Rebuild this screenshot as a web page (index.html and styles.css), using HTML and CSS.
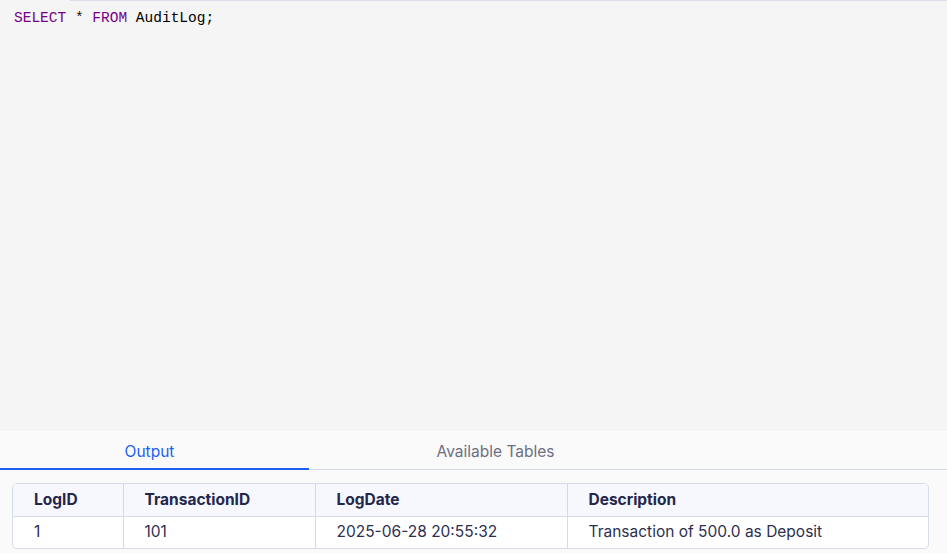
FILE: index.html
```html
<!DOCTYPE html>
<html>
<head>
<meta charset="utf-8">
<link rel="stylesheet" href="styles.css">
</head>
<body>
<div class="app">
  <div class="topline"><span class="topline-gap"></span><span class="topline-bar"></span></div>
  <div class="editor">
    <div class="code"><span class="kw">SELECT</span> <span class="op">*</span> <span class="kw">FROM</span> AuditLog;</div>
  </div>
  <div class="panel">
    <div class="tabs">
      <div class="tab tab-output active">Output</div>
      <div class="tab tab-tables">Available Tables</div>
    </div>
    <div class="result">
      <div class="card">
        <table class="grid">
          <thead>
            <tr>
              <th class="c1">LogID</th>
              <th class="c2">TransactionID</th>
              <th class="c3">LogDate</th>
              <th class="c4">Description</th>
            </tr>
          </thead>
          <tbody>
            <tr>
              <td>1</td>
              <td>101</td>
              <td>2025-06-28 20:55:32</td>
              <td>Transaction of 500.0 as Deposit</td>
            </tr>
          </tbody>
        </table>
      </div>
    </div>
  </div>
</div>
</body>
</html>
```
FILE: styles.css
```css
* { box-sizing: border-box; }
html, body { margin: 0; padding: 0; }
body { width: 947px; height: 553px; overflow: hidden; background: #fafafa; }
.app { display: flex; flex-direction: column; height: 553px; }
.topline { display: flex; height: 1px; background: #f5f5f5; }
.topline-gap { width: 70px; }
.topline-bar { flex: 1; background: #d9deea; }
.editor { height: 430px; background: #f5f5f5; padding: 8px 14px; }
.code { font-family: "Liberation Mono", "DejaVu Sans Mono", monospace; font-size: 14.5px; line-height: 18px; color: #000; }
.kw { color: #770088; }
.op { color: #221100; }
.panel { flex: 1; background: #fafafa; display: flex; flex-direction: column; }
.tabs { display: flex; height: 39px; border-bottom: 1px solid #d3dbe8; }
.tab { font-family: "Inter", "Open Sans", sans-serif; font-size: 15.5px; color: #6c6f82; display: flex; align-items: center; justify-content: center; padding-top: 3px; }
.tab-output { width: 309px; padding-right: 10px; }
.tab-tables { width: 373px; }
.tab.active { color: #1d5ef5; border-bottom: 2px solid #1d5ef5; margin-bottom: -1px; }
.result { padding: 13px 18px 0 12px; }
.card { border: 1px solid #d5dce8; border-radius: 5px; overflow: hidden; background: #fff; }
.grid { border-collapse: collapse; width: 100%; font-family: "Inter", "Open Sans", sans-serif; font-size: 15.5px; color: #2c2f50; table-layout: fixed; }
.grid th, .grid td { text-align: left; padding: 0 0 0 21px; height: 32px; border-left: 1px solid #d5dce8; white-space: nowrap; }
.grid th:first-child, .grid td:first-child { border-left: none; }
.grid thead tr { background: #f6f8fe; border-bottom: 1px solid #d5dce8; }
.grid th { font-weight: 700; color: #24264a; }
.grid td { font-weight: 400; padding-bottom: 1px; }
.c1 { width: 110px; }
.c2 { width: 192px; }
.c3 { width: 252px; }
.c4 { width: auto; }
```
